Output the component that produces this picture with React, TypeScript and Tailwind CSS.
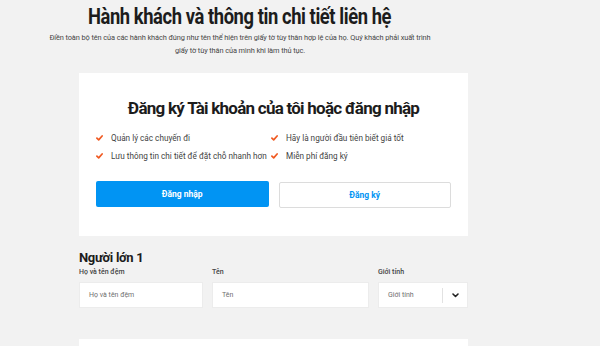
import React from "react";

const Check = () => (
  <svg width="7" height="6" viewBox="0 0 7 6" className="shrink-0">
    <path d="M0.9 3.1 L2.7 4.9 L6.1 1" fill="none" stroke="#f05a22" strokeWidth="1.7" strokeLinecap="round" strokeLinejoin="round" />
  </svg>
);

const Chevron = () => (
  <svg width="7" height="5" viewBox="0 0 7 5">
    <path d="M1 1 L3.5 3.5 L6 1" fill="none" stroke="#222" strokeWidth="1.6" strokeLinecap="round" strokeLinejoin="round" />
  </svg>
);

export default function App() {
  const items = [
    "Quản lý các chuyến đi",
    "Hãy là người đầu tiên biết giá tốt",
    "Lưu thông tin chi tiết để đặt chỗ nhanh hơn",
    "Miễn phí đăng ký",
  ];
  return (
    <div className="min-h-screen w-full overflow-hidden bg-[#f2f2f2] font-['Roboto','Liberation_Sans',sans-serif]">
      <div className="w-[480px]">
        <header className="pt-[4px] text-center">
          <h1 className="text-[22px] leading-[26px] font-bold text-[#1c1c1c]">
            <span className="inline-block origin-center scale-x-[0.835] whitespace-nowrap tracking-[-0.5px]">
              Hành khách và thông tin chi tiết liên hệ
            </span>
          </h1>
          <p className="mt-[2px] text-[7.4px] leading-[12.5px] tracking-[-0.1px] text-[#474747]">
            Điền toàn bộ tên của các hành khách đúng như tên thể hiện trên giấy tờ tùy thân hợp lệ của họ. Quý khách phải xuất trình
            <br />
            giấy tờ tùy thân của mình khi làm thủ tục.
          </p>
        </header>

        <div className="ml-[79px] mt-[16px] w-[389px]">
          <section className="bg-white px-[17px] pt-[25px] pb-[28px]">
            <h2 className="text-center text-[17px] leading-[20px] font-bold tracking-[-0.75px] text-[#1c1c1c]">
              Đăng ký Tài khoản của tôi hoặc đăng nhập
            </h2>
            <ul className="mt-[11px] grid grid-cols-[175px_1fr]">
              {items.map((t) => (
                <li key={t} className="flex h-[18px] items-center gap-[8px] text-[8.2px] text-[#434343]">
                  <Check />
                  <span className="whitespace-nowrap">{t}</span>
                </li>
              ))}
            </ul>
            <div className="mt-[16px] grid grid-cols-2 gap-[10px]">
              <button className="h-[26px] rounded-[2px] bg-[#0194f3] text-[8.5px] font-bold text-white">
                Đăng nhập
              </button>
              <button className="mt-[1px] h-[26px] rounded-[2px] border border-[#dcdcdc] bg-white text-[8.5px] font-bold text-[#0194f3]">
                Đăng ký
              </button>
            </div>
          </section>

          <section className="mt-[14px]">
            <h3 className="text-[13px] leading-[16px] font-bold tracking-[-0.3px] text-[#1c1c1c]">Người lớn 1</h3>
            <div className="grid grid-cols-[124px_157px_1fr] gap-x-[9px]">
              <label className="text-[7px] leading-[12px] font-medium text-[#444]">Họ và tên đệm</label>
              <label className="text-[7px] leading-[12px] font-medium text-[#444]">Tên</label>
              <label className="text-[7px] leading-[12px] font-medium text-[#444]">Giới tính</label>
              <div className="mt-[4px] flex h-[26px] items-center border border-[#ececec] bg-white px-[9px] text-[7px] text-[#6f6f6f]">
                Họ và tên đệm
              </div>
              <div className="mt-[4px] flex h-[26px] items-center border border-[#ececec] bg-white px-[9px] text-[7px] text-[#6f6f6f]">
                Tên
              </div>
              <div className="mt-[4px] flex h-[26px] items-center border border-[#ececec] bg-white text-[7px] text-[#6f6f6f]">
                <span className="flex-1 pl-[9px]">Giới tính</span>
                <span className="h-[15px] w-px bg-[#e2e2e2]" />
                <span className="flex w-[24px] justify-center">
                  <Chevron />
                </span>
              </div>
            </div>
          </section>

          <div className="mt-[31px] h-[40px] bg-white" />
        </div>
      </div>
    </div>
  );
}
